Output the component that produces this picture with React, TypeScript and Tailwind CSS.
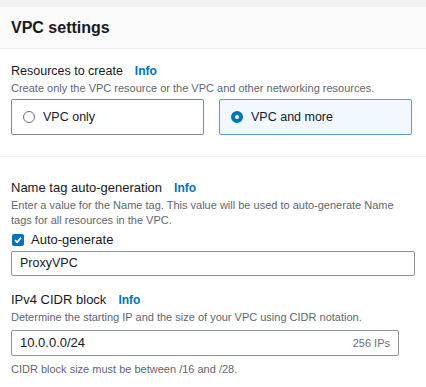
const font = { fontFamily: '"Liberation Sans", Arial, sans-serif' };

const Info = () => (
  <span className="ml-3 text-[12px] font-bold text-[#0073bb]">Info</span>
);

export default function App() {
  return (
    <div className="w-[426px] h-[387px] bg-white text-[#16191f] overflow-hidden" style={font}>
      <div className="h-[7px] bg-[#f2f3f3]" />
      <div className="h-[42px] bg-[#fafafa] border-b border-[#eaeded] flex items-center px-[11px]">
        <h2 className="text-[16px] font-bold text-[#16191f]">VPC settings</h2>
      </div>

      <div className="px-[11px] pt-[14px] pb-[21px] border-b border-[#eaeded]">
        <div className="flex items-center text-[12.5px] leading-[16px]">
          Resources to create <Info />
        </div>
        <p className="text-[11px] leading-[16px] text-[#5f6670] mt-[1px]">
          Create only the VPC resource or the VPC and other networking resources.
        </p>
        <div className="grid grid-cols-2 gap-[15px] mt-[3px] w-[401px]">
          <div className="h-[36px] border border-[#7d8998] rounded-[2px] flex items-center px-[11px] gap-[8px]">
            <span className="w-[12px] h-[12px] rounded-full border border-[#687078] bg-white" />
            <span className="text-[12.5px]">VPC only</span>
          </div>
          <div className="h-[36px] border border-[#5c9bd6] rounded-[2px] bg-[#f1f8ff] flex items-center px-[11px] gap-[8px]">
            <span className="w-[12px] h-[12px] rounded-full border-[4px] border-[#0073bb] bg-white" />
            <span className="text-[12.5px]">VPC and more</span>
          </div>
        </div>
      </div>

      <div className="px-[11px] pt-[23px]">
        <div className="flex items-center text-[13px] leading-[16px]">
          Name tag auto-generation <Info />
        </div>
        <p className="text-[11px] leading-[15px] text-[#5f6670] mt-[2px] pr-[14px]">
          Enter a value for the Name tag. This value will be used to auto-generate Name tags for all resources in the VPC.
        </p>
        <label className="flex items-center gap-[7px] mt-[4px] text-[13px] leading-[16px]">
          <span className="w-[12px] h-[12px] rounded-[2px] bg-[#0073bb] flex items-center justify-center ml-[1px]">
            <svg width="10" height="10" viewBox="0 0 10 10">
              <path d="M2 5.2 L4.2 7.3 L8 2.6" fill="none" stroke="white" strokeWidth="1.7" />
            </svg>
          </span>
          Auto-generate
        </label>
        <div className="mt-[3px] h-[25px] border border-[#879596] rounded-[2px] flex items-center px-[8px] text-[12.5px]">
          ProxyVPC
        </div>

        <div className="flex items-center text-[13px] leading-[16px] mt-[16px]">
          IPv4 CIDR block <Info />
        </div>
        <p className="text-[11px] leading-[16px] text-[#5f6670] mt-[1px]">
          Determine the starting IP and the size of your VPC using CIDR notation.
        </p>
        <div className="mt-[5px] w-[388px] h-[26px] border border-[#879596] rounded-[2px] flex items-center justify-between px-[8px]">
          <span className="text-[13px]">10.0.0.0/24</span>
          <span className="text-[11px] text-[#687078]">256 IPs</span>
        </div>
        <p className="text-[11px] leading-[16px] text-[#5f6670] mt-[5px]">
          CIDR block size must be between /16 and /28.
        </p>
      </div>
    </div>
  );
}
